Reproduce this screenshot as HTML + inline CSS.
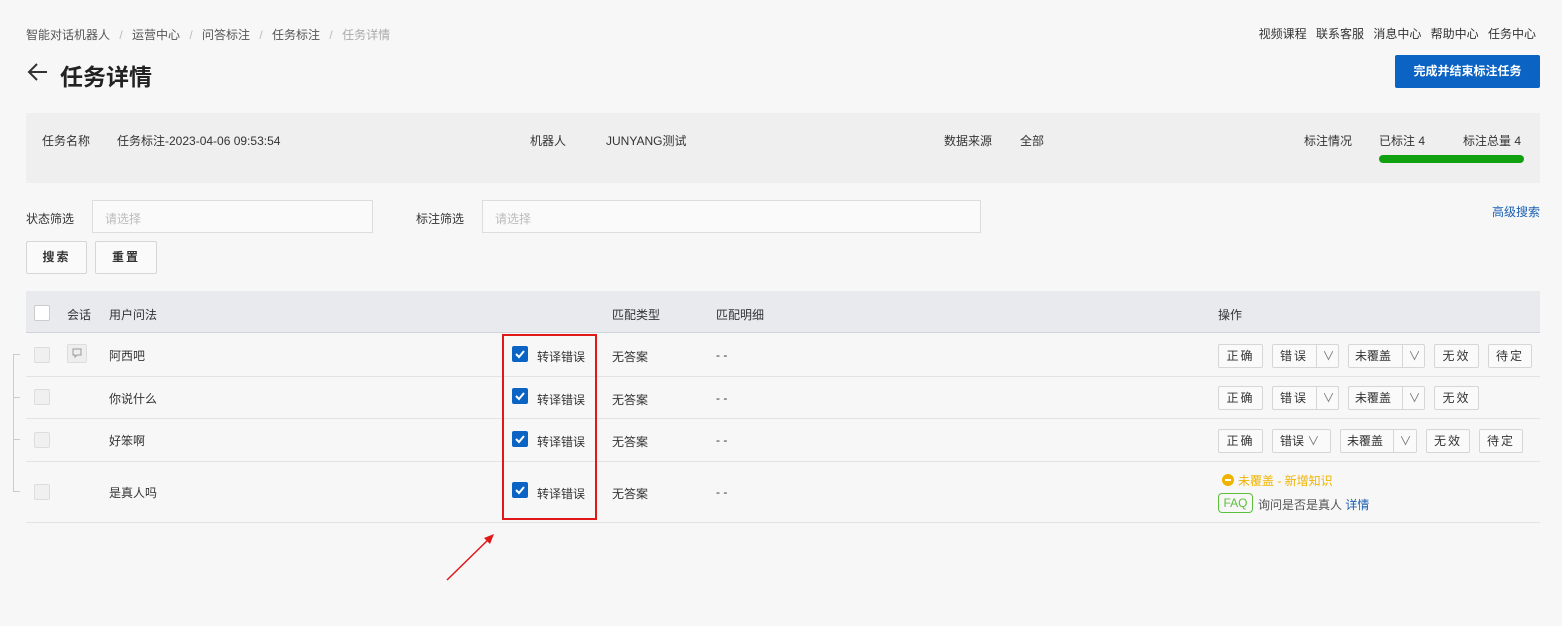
<!DOCTYPE html>
<html><head><meta charset="utf-8"><style>
*{box-sizing:border-box;margin:0;padding:0}
body{width:1562px;height:626px;background:#f7f7f7;font-family:"Liberation Sans","Noto Sans CJK SC",sans-serif;font-size:12px;color:#333;position:relative;overflow:hidden}
.a{position:absolute;white-space:nowrap}
.btn{position:absolute;height:24px;border:1px solid #d6d6d6;background:#fafafa;border-radius:2px;font-size:12px;line-height:22px;text-align:center;color:#333;letter-spacing:2px}
.sp{position:absolute;top:0;bottom:0;border-left:1px solid #d6d6d6;width:24px;text-align:center;color:#777;letter-spacing:0}
.cb{position:absolute;width:16px;height:16px;border:1px solid #ddd;background:#f0f0f0;border-radius:2px}
.ck{position:absolute;width:16px;height:16px;background:#0b63c4;border-radius:2px}
.line{position:absolute;left:26px;width:1514px;height:1px;background:#e3e3e3}
</style></head><body>
<div class="a" style="left:26px;top:26px;color:#555">智能对话机器人 <span style="color:#bbb;margin:0 6px">/</span> 运营中心 <span style="color:#bbb;margin:0 6px">/</span> 问答标注 <span style="color:#bbb;margin:0 6px">/</span> 任务标注 <span style="color:#bbb;margin:0 6px">/</span> <span style="color:#aaa">任务详情</span></div>
<div class="a" style="right:26px;top:25px;color:#333;word-spacing:6px">视频课程 联系客服 消息中心 帮助中心 任务中心</div>
<svg class="a" style="left:27px;top:62px" width="22" height="20" viewBox="0 0 22 20"><path d="M20 10H3M10 2L2 10L10 18" fill="none" stroke="#333" stroke-width="2"/></svg>
<div class="a" style="left:60px;top:58px;font-size:23px;font-weight:bold;color:#222">任务详情</div>
<div class="a" style="left:1395px;top:55px;width:145px;height:33px;background:#0b63c4;color:#fff;font-weight:bold;text-align:center;line-height:33px;border-radius:2px">完成并结束标注任务</div>
<div class="a" style="left:26px;top:113px;width:1514px;height:70px;background:#efefef"></div>
<div class="a" style="left:42px;top:132px">任务名称</div>
<div class="a" style="left:117px;top:132px">任务标注-2023-04-06 09:53:54</div>
<div class="a" style="left:530px;top:132px">机器人</div>
<div class="a" style="left:606px;top:132px">JUNYANG测试</div>
<div class="a" style="left:944px;top:132px">数据来源</div>
<div class="a" style="left:1020px;top:132px">全部</div>
<div class="a" style="left:1304px;top:132px">标注情况</div>
<div class="a" style="left:1379px;top:132px">已标注 4</div>
<div class="a" style="left:1463px;top:132px">标注总量 4</div>
<div class="a" style="left:1379px;top:155px;width:145px;height:8px;background:#10a010;border-radius:4px"></div>
<div class="a" style="left:26px;top:210px">状态筛选</div>
<div class="a" style="left:92px;top:200px;width:281px;height:33px;border:1px solid #ddd;background:#fafafa;color:#bbb;padding:9px 12px">请选择</div>
<div class="a" style="left:416px;top:210px">标注筛选</div>
<div class="a" style="left:482px;top:200px;width:499px;height:33px;border:1px solid #ddd;background:#fafafa;color:#bbb;padding:9px 12px">请选择</div>
<div class="a" style="right:22px;top:203px;color:#1a5fb4">高级搜索</div>
<div class="btn" style="left:26px;top:241px;width:61px;height:33px;line-height:31px;font-weight:bold">搜索</div>
<div class="btn" style="left:95px;top:241px;width:62px;height:33px;line-height:31px;font-weight:bold">重置</div>
<div class="a" style="left:26px;top:291px;width:1514px;height:42px;background:#e8eaee;border-bottom:1px solid #cfd3da"></div>
<div class="cb" style="left:34px;top:305px;background:#fff;border-color:#ccc"></div>
<div class="a" style="left:67px;top:306px">会话</div>
<div class="a" style="left:109px;top:306px">用户问法</div>
<div class="a" style="left:612px;top:306px">匹配类型</div>
<div class="a" style="left:716px;top:306px">匹配明细</div>
<div class="a" style="left:1218px;top:306px">操作</div>
<div class="line" style="top:376px"></div><div class="line" style="top:418px"></div><div class="line" style="top:461px"></div><div class="line" style="top:522px"></div>
<div class="a" style="left:13px;top:355px;width:7px;height:137px;border-left:1px solid #ccc"></div>
<div class="a" style="left:13px;top:354px;width:7px;height:1px;background:#ccc"></div><div class="a" style="left:13px;top:397px;width:7px;height:1px;background:#ccc"></div><div class="a" style="left:13px;top:439px;width:7px;height:1px;background:#ccc"></div><div class="a" style="left:13px;top:491px;width:7px;height:1px;background:#ccc"></div>
<div class="cb" style="left:34px;top:347px"></div><div class="cb" style="left:34px;top:389px"></div><div class="cb" style="left:34px;top:432px"></div><div class="cb" style="left:34px;top:484px"></div>
<div class="a" style="left:67px;top:344px;width:20px;height:19px;border:1px solid #ddd;background:#eee;border-radius:2px"><svg width="18" height="17" viewBox="0 0 18 17"><path d="M5 4h8v6H9l-2 2v-2H5z" fill="none" stroke="#999"/></svg></div>
<div class="a" style="left:109px;top:347px">阿西吧</div>
<div class="a" style="left:109px;top:390px">你说什么</div>
<div class="a" style="left:109px;top:432px">好笨啊</div>
<div class="a" style="left:109px;top:484px">是真人吗</div>
<div class="a" style="left:502px;top:334px;width:95px;height:186px;border:2px solid #e01818"></div>
<div class="ck" style="left:512px;top:346px"></div><div class="ck" style="left:512px;top:388px"></div><div class="ck" style="left:512px;top:431px"></div><div class="ck" style="left:512px;top:482px"></div>
<svg class="a" style="left:512px;top:346px" width="16" height="160"><g fill="none" stroke="#fff" stroke-width="2"><path d="M4 8l3 3 5-6"/><path d="M4 50l3 3 5-6"/><path d="M4 93l3 3 5-6"/><path d="M4 144l3 3 5-6"/></g></svg>
<div class="a" style="left:537px;top:348px">转译错误</div><div class="a" style="left:537px;top:391px">转译错误</div><div class="a" style="left:537px;top:433px">转译错误</div><div class="a" style="left:537px;top:485px">转译错误</div>
<div class="a" style="left:612px;top:348px">无答案</div><div class="a" style="left:612px;top:391px">无答案</div><div class="a" style="left:612px;top:433px">无答案</div><div class="a" style="left:612px;top:485px">无答案</div>
<div class="a" style="left:716px;top:348px">- -</div><div class="a" style="left:716px;top:391px">- -</div><div class="a" style="left:716px;top:433px">- -</div><div class="a" style="left:716px;top:485px">- -</div>
<div class="btn" style="left:1218px;top:344px;width:45px">正确</div>
<div class="btn" style="left:1272px;top:344px;width:67px;text-align:left;padding-left:7px">错误<span class="sp" style="left:43px">∨</span></div>
<div class="btn" style="left:1348px;top:344px;width:77px;text-align:left;padding-left:6px;letter-spacing:0">未覆盖<span class="sp" style="left:53px">∨</span></div>
<div class="btn" style="left:1434px;top:344px;width:45px">无效</div>
<div class="btn" style="left:1488px;top:344px;width:44px">待定</div>
<div class="btn" style="left:1218px;top:386px;width:45px">正确</div>
<div class="btn" style="left:1272px;top:386px;width:67px;text-align:left;padding-left:7px">错误<span class="sp" style="left:43px">∨</span></div>
<div class="btn" style="left:1348px;top:386px;width:77px;text-align:left;padding-left:6px;letter-spacing:0">未覆盖<span class="sp" style="left:53px">∨</span></div>
<div class="btn" style="left:1434px;top:386px;width:45px">无效</div>
<div class="btn" style="left:1218px;top:429px;width:45px">正确</div>
<div class="btn" style="left:1272px;top:429px;width:59px;text-align:left;padding-left:7px;letter-spacing:0">错误 <span style="color:#777">∨</span></div>
<div class="btn" style="left:1340px;top:429px;width:77px;text-align:left;padding-left:6px;letter-spacing:0">未覆盖<span class="sp" style="left:52px">∨</span></div>
<div class="btn" style="left:1426px;top:429px;width:44px">无效</div>
<div class="btn" style="left:1479px;top:429px;width:44px">待定</div>
<div class="a" style="left:1222px;top:474px;width:12px;height:12px;border-radius:50%;background:#f0b400"><div style="margin:5px 3px;height:2px;background:#fff"></div></div>
<div class="a" style="left:1238px;top:472px;color:#f0b400">未覆盖 - 新增知识</div>
<div class="a" style="left:1218px;top:493px;width:35px;height:20px;border:1px solid #5cc03a;border-radius:4px;color:#5cc03a;text-align:center;line-height:18px">FAQ</div>
<div class="a" style="left:1258px;top:496px;color:#555">询问是否是真人 <span style="color:#1a5fb4">详情</span></div>
<svg class="a" style="left:440px;top:530px" width="60" height="55"><path d="M7 50L52 6" stroke="#e01818" stroke-width="1.5"/><path d="M54 4L44 8L50 14Z" fill="#e01818"/></svg>
</body></html>
